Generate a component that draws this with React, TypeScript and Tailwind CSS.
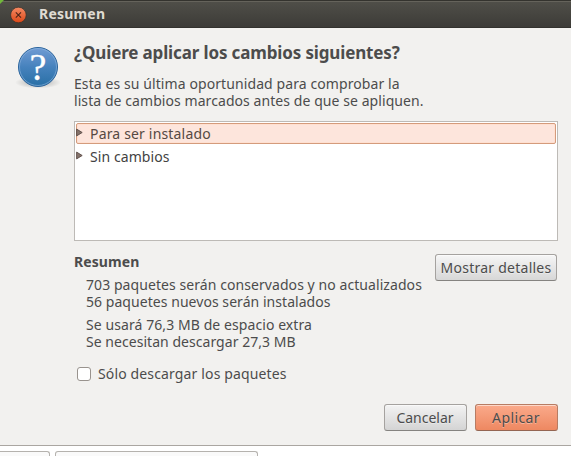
import type { ReactNode } from "react";

function Line({ className = "", children }: { className?: string; children: ReactNode }) {
  return <div className={`h-[17px] leading-[17px] whitespace-nowrap ${className}`}>{children}</div>;
}

function Button({ className, children }: { className: string; children: ReactNode }) {
  return (
    <button
      className={`flex h-[27px] shrink-0 items-center justify-center rounded-[3px] border whitespace-nowrap shadow-[inset_0_1px_0_rgba(255,255,255,0.55)] [text-shadow:0_1px_0_rgba(255,255,255,0.35)] ${className}`}
    >
      {children}
    </button>
  );
}

function Expander() {
  return (
    <svg width="8" height="9" viewBox="0 0 8 9" className="mt-[4px] -ml-px shrink-0">
      <path d="M.6 1.1 6.2 4.5.6 7.9Z" fill="#85736b" stroke="#5a4c46" strokeWidth=".9" />
    </svg>
  );
}

function CloseIcon() {
  return (
    <svg width="18" height="18" viewBox="0 0 18 18">
      <defs>
        <linearGradient id="close" x2="0" y2="1">
          <stop stopColor="#f58a63" />
          <stop offset="1" stopColor="#dc4818" />
        </linearGradient>
      </defs>
      <circle cx="9.4" cy="9" r="7.8" fill="url(#close)" stroke="#35302a" strokeWidth=".7" />
      <path d="m6.8 6.4 5.2 5.2m0-5.2-5.2 5.2" stroke="#4b2418" strokeWidth="1.1" />
    </svg>
  );
}

function QuestionIcon() {
  return (
    <svg width="48" height="48" viewBox="0 0 48 48">
      <defs>
        <linearGradient id="ball" x2="0" y2="1">
          <stop stopColor="#719cd4" />
          <stop offset=".5" stopColor="#4682bd" />
          <stop offset="1" stopColor="#286fa5" />
        </linearGradient>
        <radialGradient id="shade">
          <stop stopColor="#000" stopOpacity=".3" />
          <stop offset="1" stopColor="#000" stopOpacity="0" />
        </radialGradient>
      </defs>
      <ellipse cx="24" cy="39.5" rx="23" ry="6" fill="url(#shade)" />
      <circle cx="24" cy="24" r="19.5" fill="url(#ball)" stroke="#2b649c" />
      <circle cx="24" cy="24" r="18.5" fill="none" stroke="#8eb5df" strokeOpacity=".6" />
      <text
        x="24"
        y="37"
        textAnchor="middle"
        fontFamily="Liberation Serif, serif"
        fontSize="38"
        fill="#fff"
        stroke="#fff"
        strokeWidth=".3"
      >
        ?
      </text>
    </svg>
  );
}

export default function App() {
  return (
    <div className="flex h-[456px] w-[571px] flex-col overflow-hidden bg-white font-['Noto_Sans',sans-serif] text-[14px] text-[#4c4c4c]">
      <header className="relative flex h-[28px] shrink-0 items-center border-t border-[#34332e] bg-linear-to-b from-[#504f49] to-[#3c3b37] pl-[9px] shadow-[inset_0_1px_0_#65635b,inset_0_-1px_0_#33322e]">
        <span className="absolute -top-px left-0 size-[4px] bg-[#71b83b] [clip-path:polygon(0_0,100%_0,0_100%)]" />
        <CloseIcon />
        <span className="mt-[-2px] ml-[12px] font-bold tracking-[0.2px] text-[#dfdbd2]">Resumen</span>
      </header>
      <main className="flex h-[417px] shrink-0 bg-[#f2f1ef] pt-[15px] pr-[13px] pl-[14px]">
        <div className="w-[60px] shrink-0">
          <QuestionIcon />
        </div>
        <div className="w-[484px]">
          <h1 className="h-[20px] text-[17px] leading-[20px] font-bold tracking-[-0.14px] whitespace-nowrap">
            ¿Quiere aplicar los cambios siguientes?
          </h1>
          <div className="mt-[12px]">
            <Line className="tracking-[0.09px]">Esta es su última oportunidad para comprobar la</Line>
            <Line className="tracking-[0.07px]">lista de cambios marcados antes de que se apliquen.</Line>
          </div>
          <div className="mt-[12px] h-[120px] border border-[#bdbab6] bg-white p-px">
            <div className="-mr-px flex h-[21px] w-[480px] rounded-[2px] border border-[#d49b7c] bg-[#fde5dc] text-[#564943] shadow-[inset_0_0_0_1px_#ffe0d1]">
              <Expander />
              <Line className="mt-px ml-[6px] tracking-[0.17px]">Para ser instalado</Line>
            </div>
            <div className="mt-[3px] flex pl-px text-[#424242]">
              <Expander />
              <Line className="mt-[1px] ml-[6px] tracking-[0.08px]">Sin cambios</Line>
            </div>
          </div>
          <div className="mt-[12px] flex justify-between">
            <div>
              <Line className="font-bold tracking-[0.1px]">Resumen</Line>
              <div className="mt-[6px] pl-[12px]">
                <Line className="tracking-[0.07px]">703 paquetes serán conservados y no actualizados</Line>
                <Line className="tracking-[0.05px]">56 paquetes nuevos serán instalados</Line>
                <Line className="mt-[6px] tracking-[0.08px]">Se usará 76,3 MB de espacio extra</Line>
                <Line className="tracking-[0.04px]">Se necesitan descargar 27,3 MB</Line>
              </div>
            </div>
            <Button className="mt-px mr-px w-[122px] border-[#a5a29f] border-b-[#858380] bg-linear-to-b from-[#f6f6f6] to-[#d7d7d7]">
              <span className="tracking-[0.25px]">Mostrar detalles</span>
            </Button>
          </div>
          <label className="mt-[15px] flex items-center pl-[3px]">
            <span className="size-[14px] rounded-[3px] border border-[#99938e] bg-white" />
            <Line className="ml-[7px] tracking-[0.14px]">Sólo descargar los paquetes</Line>
          </label>
          <div className="mt-[22px] flex justify-end gap-[8px]">
            <Button className="w-[83px] border-[#a5a29f] border-b-[#858380] bg-linear-to-b from-[#f3f3f3] to-[#d4d4d4]">
              <span className="mr-[1px]">Cancelar</span>
            </Button>
            <Button className="w-[83px] border-[#b77c63] border-b-[#946552] bg-linear-to-b from-[#faaa8b] to-[#ee8861]">
              <span className="mr-[1px] tracking-[0.4px]">Aplicar</span>
            </Button>
          </div>
        </div>
      </main>
      <footer className="flex h-[11px] shrink-0 gap-[5px] border-t border-[#aaa6a1] bg-white pt-[5px]">
        <div className="h-[5px] w-[50px] shrink-0 rounded-tr-[3px] border-t border-r border-[#b5b2ae] bg-[#fafafa]" />
        <div className="h-[5px] w-[203px] shrink-0 rounded-t-[3px] border border-b-0 border-[#b5b2ae] bg-[#fafafa]" />
      </footer>
    </div>
  );
}
